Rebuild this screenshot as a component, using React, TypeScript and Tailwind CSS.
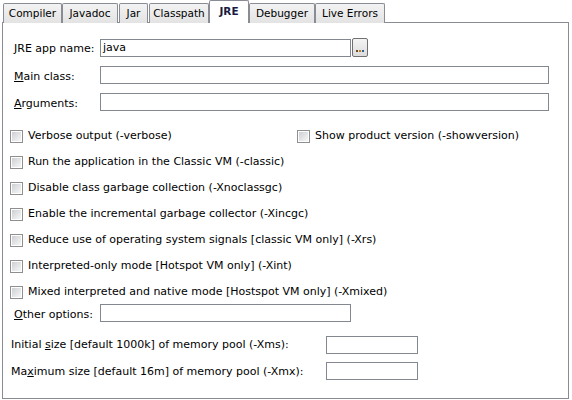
import React from 'react';

const tabs = [
  { name: 'Compiler', cls: 'w-[59px] mr-0' },
  { name: 'Javadoc', cls: 'w-[56px] mr-[1px]' },
  { name: 'Jar', cls: 'w-[29px] mr-[1px]' },
  { name: 'Classpath', cls: 'w-[60px] mr-0' },
  { name: 'JRE', cls: 'w-[40px] mr-0' },
  { name: 'Debugger', cls: 'w-[66px] mr-0' },
  { name: 'Live Errors', cls: 'w-[70px] mr-0' },
];

const Checkbox = ({ label }: { label: string }) => (
  <div className="flex items-center gap-[5px]">
    <div className="w-[13px] h-[13px] border border-[#8f8f8f] bg-white flex items-center justify-center">
      <div className="w-[9px] h-[9px] bg-gradient-to-br from-[#cdd0d4] to-[#f7f7f7]" />
    </div>
    <span>{label}</span>
  </div>
);

const TextInput = ({ className = '', value = '' }: { className?: string; value?: string }) => (
  <div className={`h-[18px] border border-[#828790] bg-white px-[2px] leading-[16px] ${className}`}>{value}</div>
);

const App = () => {
  const checkRows = [
    'Run the application in the Classic VM (-classic)',
    'Disable class garbage collection (-Xnoclassgc)',
    'Enable the incremental garbage collector (-Xincgc)',
    'Reduce use of operating system signals [classic VM only] (-Xrs)',
    'Interpreted-only mode [Hotspot VM only] (-Xint)',
    'Mixed interpreted and native mode [Hostspot VM only] (-Xmixed)',
  ];

  return (
    <div
      className="w-[572px] h-[400px] bg-white text-black text-[11px] overflow-hidden"
      style={{ fontFamily: '"DejaVu Sans", sans-serif' }}
    >
      {/* Tab strip */}
      <div className="flex items-end h-[23px] pl-[3px] relative z-10 text-[10.5px]">
        {tabs.map(tab =>
          tab.name === 'JRE' ? (
            <div
              key={tab.name}
              className={`h-[23px] ${tab.cls} border border-b-0 border-[#898c95] rounded-t-[2px] bg-white font-bold text-[#1a1a40] flex items-center justify-center`}
            >
              {tab.name}
            </div>
          ) : (
            <div
              key={tab.name}
              className={`h-[20px] ${tab.cls} border border-b-0 border-[#898c95] rounded-t-[2px] bg-gradient-to-b from-[#f3f3f3] to-[#e3e3e3] flex items-center justify-center`}
            >
              {tab.name}
            </div>
          )
        )}
      </div>

      {/* Panel */}
      <div className="ml-[2px] w-[567px] h-[377px] -mt-px border border-[#898c95] bg-white">
        <div className="flex flex-col pt-[15px]">
          <div className="flex items-center pl-[11px] h-[19px]">
            <span className="w-[86px] mt-[4px]">JRE app name:</span>
            <TextInput className="w-[251px]" value="java" />
            <div className="ml-[1px] w-[16px] h-[19px] border border-[#707070] rounded-[2px] bg-gradient-to-b from-[#f4f4f4] to-[#dcdcdc] flex items-end justify-center gap-[1px] pb-[4px]">
              <span className="w-[2px] h-[2px] bg-[#6b4a1e]" />
              <span className="w-[2px] h-[2px] bg-[#c27c1a]" />
              <span className="w-[2px] h-[2px] bg-[#2a5d9a]" />
            </div>
          </div>
          <div className="flex items-center pl-[11px] h-[18px] mt-[9px]">
            <span className="w-[86px] mt-[4px]">
              <span className="underline">M</span>ain class:
            </span>
            <TextInput className="w-[449px]" />
          </div>
          <div className="flex items-center pl-[11px] h-[18px] mt-[9px]">
            <span className="w-[86px] mt-[4px]">
              <span className="underline">A</span>rguments:
            </span>
            <TextInput className="w-[449px]" />
          </div>

          {/* Options */}
          <div className="flex flex-col pl-[7px] mt-[12px]">
            <div className="flex items-center h-[26px]">
              <div className="w-[287px]">
                <Checkbox label="Verbose output (-verbose)" />
              </div>
              <Checkbox label="Show product version (-showversion)" />
            </div>
            {checkRows.map(row => (
              <div key={row} className="flex items-center h-[26px]">
                <Checkbox label={row} />
              </div>
            ))}
          </div>

          <div className="flex items-center pl-[11px] h-[18px] -mt-[1px]">
            <span className="w-[86px] mt-[4px]">
              <span className="underline">O</span>ther options:
            </span>
            <TextInput className="w-[251px]" />
          </div>

          <div className="flex items-center pl-[8px] h-[18px] mt-[14px]">
            <span className="w-[315px]">
              Initial <span className="underline">s</span>ize [default 1000k] of memory pool (-Xms):
            </span>
            <TextInput className="w-[92px]" />
          </div>
          <div className="flex items-center pl-[8px] h-[18px] mt-[8px]">
            <span className="w-[315px] mt-[3px]">
              Ma<span className="underline">x</span>imum size [default 16m] of memory pool (-Xmx):
            </span>
            <TextInput className="w-[92px]" />
          </div>
        </div>
      </div>
    </div>
  );
};

export default App;
